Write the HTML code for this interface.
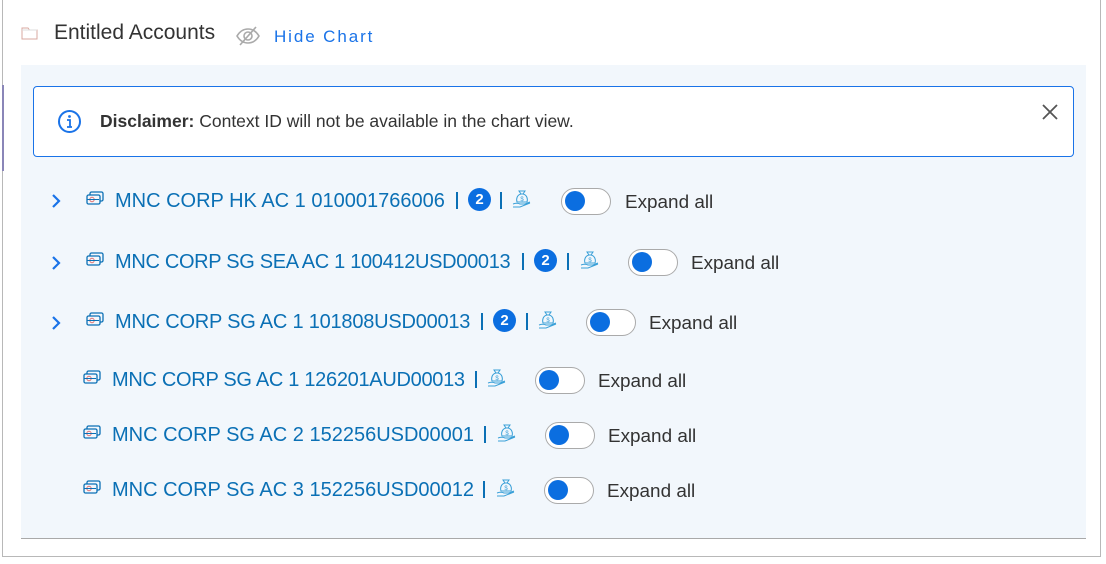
<!DOCTYPE html>
<html><head><meta charset="utf-8"><style>
*{margin:0;padding:0;box-sizing:border-box}
body{width:1106px;height:564px;background:#fff;position:relative;overflow:hidden;font-family:"Liberation Sans",Arial,sans-serif}
.frame{position:absolute;left:2px;top:-2px;width:1099px;height:559px;border:1.5px solid #b8b8b8}
.purple{position:absolute;left:2px;top:85px;width:2px;height:86px;background:#8a86b8}
.panel{position:absolute;left:21px;top:65px;width:1065px;height:474px;background:#f2f7fc;border-bottom:1px solid #a9a9a9}
.abs{position:absolute;white-space:nowrap}
.disc{position:absolute;left:33px;top:86px;width:1041px;height:71px;background:#fff;border:1.5px solid #1a73e8;border-radius:4px}
.acct{position:absolute;color:#0b70b5;font-size:20px;line-height:22px;white-space:nowrap}
.sep{position:absolute;width:2px;height:17px;background:#0b70b5}
.badge{position:absolute;width:23px;height:23px;border-radius:50%;background:#0b6ee0;color:#fff;font-size:15px;font-weight:bold;text-align:center;line-height:23px}
.tog{position:absolute;width:50px;height:27px;border:1.5px solid #aaa;border-radius:14px;background:#fff}
.tog::after{content:"";position:absolute;left:3px;top:2px;width:20px;height:20px;border-radius:50%;background:#0b6ee0}
.exp{position:absolute;font-size:18.9px;color:#333;white-space:nowrap;line-height:22px}
</style></head><body>
<div class="frame"></div><div class="purple"></div>
<svg class="abs" style="left:21px;top:25px" width="18" height="16" viewBox="0 0 18 16"><path d="M1 3h6l1.5 2H16v9H1z" fill="#fff" stroke="#d9a9a0" stroke-width="1"/><path d="M1 5h15" stroke="#ddd"/></svg>
<div class="abs" style="left:54px;top:21px;font-size:21px;color:#333;line-height:24px">Entitled Accounts</div>
<svg class="abs" style="left:235px;top:25px" width="26" height="22" viewBox="0 0 26 22"><path d="M2 11c3-5 7-7 11-7s8 2 11 7c-3 5-7 7-11 7S5 16 2 11z" fill="none" stroke="#aaa" stroke-width="1.6"/><circle cx="13" cy="11" r="4" fill="none" stroke="#aaa" stroke-width="1.6"/><path d="M5 20L21 2" stroke="#aaa" stroke-width="1.6"/></svg>
<div class="abs" style="left:274px;top:27px;font-size:17px;color:#1a73e8;letter-spacing:1.9px;line-height:20px">Hide Chart</div>
<div class="panel"></div>
<div class="disc"></div>
<svg class="abs" style="left:57px;top:109px" width="25" height="25" viewBox="0 0 25 25"><circle cx="12.5" cy="12.5" r="10.5" fill="none" stroke="#1a73e8" stroke-width="2"/><circle cx="12.5" cy="7.5" r="1.4" fill="#1a73e8"/><path d="M10 11h3v7M10 18h5" stroke="#1a73e8" stroke-width="1.8" fill="none"/></svg>
<div class="abs" style="left:100px;top:111px;font-size:17.5px;color:#333;line-height:20px"><b>Disclaimer:</b> Context ID will not be available in the chart view.</div>
<svg class="abs" style="left:1042px;top:104px" width="16" height="16" viewBox="0 0 16 16"><path d="M1 1L15 15M15 1L1 15" stroke="#555" stroke-width="1.8"/></svg>

<svg width="0" height="0" style="position:absolute"><defs>
<g id="card"><rect x="4" y="1" width="13" height="9" rx="1.5" fill="none" stroke="#0b70b5" stroke-width="1.3"/><rect x="1" y="4" width="13" height="9" rx="1.5" fill="#f2f7fc" stroke="#0b70b5" stroke-width="1.3"/><circle cx="6" cy="8.5" r="2.2" fill="none" stroke="#e07070" stroke-width="1"/><path d="M1 8.5h12" stroke="#0b70b5" stroke-width="1"/></g>
<g id="bag"><path d="M7 2h6l-2 3h-2zM9 5c-4 1-5 5-4 8h10c1-3 0-7-4-8z" fill="none" stroke="#3aa0d8" stroke-width="1"/><text x="10" y="12" font-size="6" fill="#3aa0d8" text-anchor="middle" font-family="Liberation Sans">$</text><path d="M1 15c3-1 5-1 7 0h5l5-2M1 18h7l10-4" fill="none" stroke="#3aa0d8" stroke-width="1"/></g>
<g id="chev"><path d="M2 1l6 6-6 6" fill="none" stroke="#1a73e8" stroke-width="2.2"/></g>
</defs></svg>

<svg class="abs" style="left:51px;top:194px" width="12" height="15"><use href="#chev"/></svg>
<svg class="abs" style="left:86px;top:191px" width="20" height="16"><use href="#card"/></svg>
<div class="acct" style="left:115px;top:190px">MNC CORP HK AC 1 010001766006</div>
<div class="sep" style="left:456px;top:192px"></div>
<div class="badge" style="left:468px;top:188px">2</div>
<div class="sep" style="left:500px;top:192px"></div>
<svg class="abs" style="left:512px;top:189px" width="20" height="20"><use href="#bag"/></svg>
<div class="tog" style="left:561px;top:188px"></div>
<div class="exp" style="left:625px;top:192px">Expand all</div>

<svg class="abs" style="left:51px;top:256px" width="12" height="15"><use href="#chev"/></svg>
<svg class="abs" style="left:86px;top:252px" width="20" height="16"><use href="#card"/></svg>
<div class="acct" style="left:115px;top:251px;letter-spacing:-0.32px">MNC CORP SG SEA AC 1 100412USD00013</div>
<div class="sep" style="left:522px;top:253px"></div>
<div class="badge" style="left:534px;top:249px">2</div>
<div class="sep" style="left:567px;top:253px"></div>
<svg class="abs" style="left:580px;top:250px" width="20" height="20"><use href="#bag"/></svg>
<div class="tog" style="left:628px;top:249px"></div>
<div class="exp" style="left:691px;top:253px">Expand all</div>

<svg class="abs" style="left:51px;top:316px" width="12" height="15"><use href="#chev"/></svg>
<svg class="abs" style="left:86px;top:312px" width="20" height="16"><use href="#card"/></svg>
<div class="acct" style="left:115px;top:311px;letter-spacing:-0.22px">MNC CORP SG AC 1 101808USD00013</div>
<div class="sep" style="left:481px;top:313px"></div>
<div class="badge" style="left:493px;top:309px">2</div>
<div class="sep" style="left:526px;top:313px"></div>
<svg class="abs" style="left:538px;top:310px" width="20" height="20"><use href="#bag"/></svg>
<div class="tog" style="left:586px;top:309px"></div>
<div class="exp" style="left:649px;top:313px">Expand all</div>

<svg class="abs" style="left:83px;top:370px" width="20" height="16"><use href="#card"/></svg>
<div class="acct" style="left:112px;top:369px;letter-spacing:-0.3px">MNC CORP SG AC 1 126201AUD00013</div>
<div class="sep" style="left:475px;top:371px"></div>
<svg class="abs" style="left:487px;top:368px" width="20" height="20"><use href="#bag"/></svg>
<div class="tog" style="left:535px;top:367px"></div>
<div class="exp" style="left:598px;top:371px">Expand all</div>

<svg class="abs" style="left:83px;top:425px" width="20" height="16"><use href="#card"/></svg>
<div class="acct" style="left:112px;top:424px">MNC CORP SG AC 2 152256USD00001</div>
<div class="sep" style="left:484px;top:426px"></div>
<svg class="abs" style="left:497px;top:423px" width="20" height="20"><use href="#bag"/></svg>
<div class="tog" style="left:545px;top:422px"></div>
<div class="exp" style="left:608px;top:426px">Expand all</div>

<svg class="abs" style="left:83px;top:480px" width="20" height="16"><use href="#card"/></svg>
<div class="acct" style="left:112px;top:479px">MNC CORP SG AC 3 152256USD00012</div>
<div class="sep" style="left:483px;top:481px"></div>
<svg class="abs" style="left:496px;top:478px" width="20" height="20"><use href="#bag"/></svg>
<div class="tog" style="left:544px;top:477px"></div>
<div class="exp" style="left:607px;top:481px">Expand all</div>
</body></html>
